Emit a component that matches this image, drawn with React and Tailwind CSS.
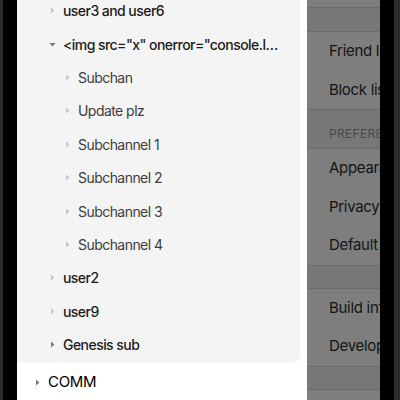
const Caret = ({ open, dark }) => (
  <svg
    width="7"
    height="7"
    viewBox="0 0 7 7"
    className={open ? 'rotate-90' : ''}
    fill={dark ? '#7a7a7a' : '#c7c7c7'}
  >
    <path d="M2 0.5 L5.5 3.5 L2 6.5 Z" />
  </svg>
);

const TreeRow = ({ label, level, open, dark, strong }) => (
  <div
    className={`flex h-[33.4px] items-center ${level === 2 ? 'pl-[47px]' : 'pl-[32px]'}`}
  >
    <div className="flex w-[14px] shrink-0 items-center">
      <Caret open={open} dark={dark} />
    </div>
    <span
      className={`truncate pr-[19px] text-[14px] tracking-[-0.55px] ${
        strong ? 'font-medium text-[#1c1c1c]' : 'text-[#3d3d3d]'
      }`}
    >
      {label}
    </span>
  </div>
);

const SettingsRow = ({ label }) => (
  <div className="flex h-[38.5px] shrink-0 items-center whitespace-nowrap bg-[#7e7e7e] pl-[22px] text-[15px] tracking-[-0.3px] text-[#141414]">
    {label}
  </div>
);

export default function App() {
  const tree = [
    { label: 'user3 and user6', level: 1, strong: true },
    { label: '<img src="x" onerror="console.log(1)">', level: 1, strong: true, open: true, dark: true },
    { label: 'Subchan', level: 2 },
    { label: 'Update plz', level: 2 },
    { label: 'Subchannel 1', level: 2 },
    { label: 'Subchannel 2', level: 2 },
    { label: 'Subchannel 3', level: 2 },
    { label: 'Subchannel 4', level: 2 },
    { label: 'user2', level: 1, strong: true },
    { label: 'user9', level: 1, strong: true },
    { label: 'Genesis sub', level: 1, strong: true, dark: true },
  ];

  return (
    <div
      className="flex h-[400px] w-[400px] overflow-hidden bg-black"
      style={{ fontFamily: 'Inter, "Noto Sans", sans-serif' }}
    >
      <div className="h-full w-[17px] shrink-0 border-l-[3px] border-[#2b2b2b] bg-black" />

      {/* drawer */}
      <div className="flex h-full w-[290px] shrink-0 flex-col bg-white">
        <div className="w-[283px] shrink-0 overflow-hidden rounded-br-lg bg-[#f4f4f4] pb-[2px]">
          <div className="-mt-[6px]">
            {tree.map((item) => (
              <TreeRow key={item.label} {...item} />
            ))}
          </div>
        </div>
        <div className="flex h-[38px] shrink-0 items-center pl-[17px]">
          <div className="flex w-[14px] shrink-0 items-center">
            <Caret dark />
          </div>
          <span className="text-[15px] tracking-[-0.3px] text-black">COMM</span>
        </div>
      </div>

      {/* dimmed settings behind */}
      <div className="flex h-full w-[73px] shrink-0 flex-col overflow-hidden bg-[#777777]">
        <div className="h-[8px] shrink-0 border-b border-[#6b6b6b] bg-[#7e7e7e]" />
        <div className="h-[24px] shrink-0 border-b border-[#6b6b6b]" />
        <SettingsRow label="Friend list" />
        <SettingsRow label="Block list" />
        <div className="flex h-[40px] shrink-0 items-end border-y border-[#6b6b6b] pb-[5px] pl-[22px] text-[12px] whitespace-nowrap tracking-wide text-[#4a4a4a]">
          PREFERENCES
        </div>
        <SettingsRow label="Appearance" />
        <SettingsRow label="Privacy" />
        <SettingsRow label="Default settings" />
        <div className="h-[24px] shrink-0 border-y border-[#6b6b6b]" />
        <SettingsRow label="Build info" />
        <SettingsRow label="Developer" />
        <div className="h-[24px] shrink-0 border-y border-[#6b6b6b]" />
        <SettingsRow label="About" />
      </div>

      <div className="h-full w-[20px] shrink-0 border-r-[6px] border-[#2b2b2b] bg-black" />
    </div>
  );
}
